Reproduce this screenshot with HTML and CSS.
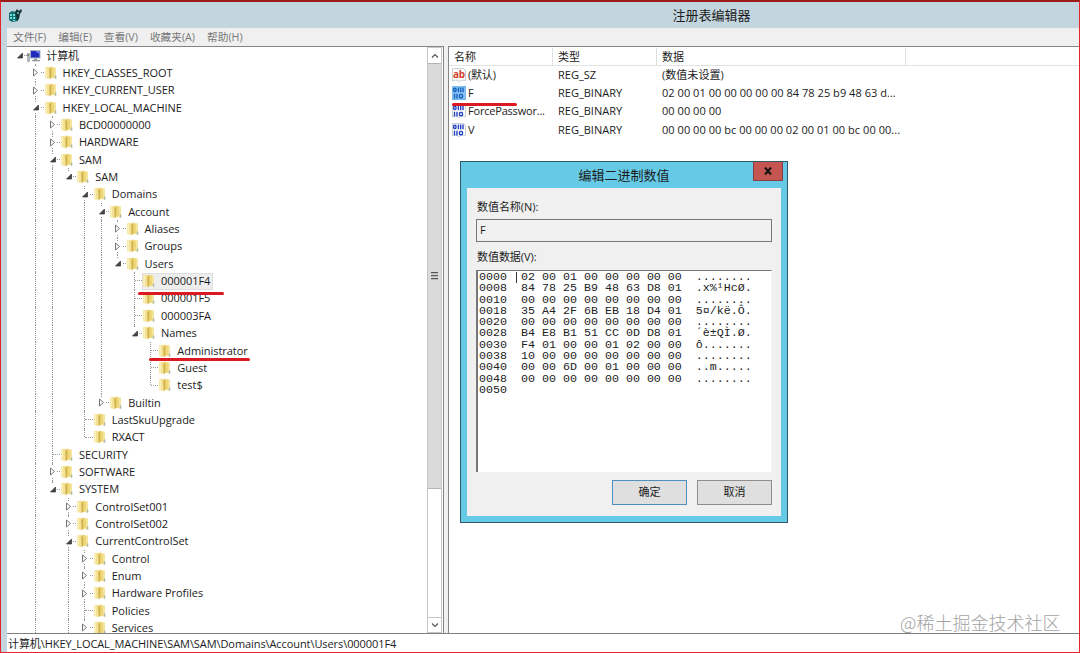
FILE: index.html
```html
<!DOCTYPE html>
<html lang="zh-CN">
<head>
<meta charset="utf-8">
<title>注册表编辑器</title>
<link rel="stylesheet" href="styles.css">
</head>
<body>
<svg class="defs" width="0" height="0">
  <defs>
    <symbol id="folder" viewBox="0 0 14 16">
      <path d="M1 2.500 5.500 1.500V14L1 13Z" fill="#f3e295"/>
      <path d="M1.500 3 3 2.700V12.800L1.500 12.500Z" fill="#fbf2bf"/>
      <path d="M5 3 8 1.500V12.500L5.500 14.500Z" fill="#e2c45c"/>
      <path d="M6.300 4V13" stroke="#c9a643" stroke-width=".9"/>
      <path d="M8 2 12 2.500V13.500L8 13Z" fill="#f5e59c"/>
      <path d="M7.500 3 10 2.500V12L7.500 13Z" fill="#eed779"/>
      <path d="M10.800 10.500H12.300V13.700H10.800Z" fill="#aeb8a2"/>
    </symbol>
    <symbol id="computer" viewBox="0 0 14 16">
      <path d="M0 5H3V14H0Z" fill="#b5b8b8"/><path d="M0 7H2" stroke="#555"/>
      <path d="M3 2H13.500V10.500H3Z" fill="#a9b4c4"/><path d="M4 3H12.500V9.500H4Z" fill="#1f2bbd"/>
      <path d="M8 3H12.500V6Z" fill="#7383ee"/><path d="M7 10.500H10V12H13V13.300H5V12H7Z" fill="#939999"/>
    </symbol>
    <symbol id="page" viewBox="0 0 14 14">
      <path d="M.5.500H12L13.500 3V12.500L10 12 7 13.500 4 12 .5 13Z" fill="#fff" stroke="#bbc1c9" stroke-width=".8"/>
    </symbol>
    <symbol id="bits" viewBox="0 0 14 14">
      <g fill="none" stroke="currentColor" stroke-width="1.400"><rect x="1.700" y="2.200" width="2.300" height="3.300" rx="1"/><path d="M6.400 1.500V6.200M8.700 1.500V6.200M11 1.500V6.200M2.500 7.700V12.400M5 7.700V12.400"/><rect x="7.500" y="8.400" width="3" height="3.300" rx="1"/></g>
    </symbol>
  </defs>
</svg>
<div class="window">
  <header class="titlebar">
    <svg class="app-icon" viewBox="0 0 15 15"><path d="M1 5 4 3 8 4 10 8V13L4 14 1 12Z" fill="#126d6c"/><path d="M2 6H4V8H2ZM5 6H7V8H5ZM2 9H4V11H2ZM5 9H7V11H5ZM5 12H7V13H5Z" fill="#70dedc"/><path d="M7 4 9 1 11 3 13 1 14 3 12 6 11 11 9 13 8 8Z" fill="#173238"/><path d="M9 4H11V6H9Z" fill="#4aa4a8"/></svg>
    <span class="title">注册表编辑器</span>
  </header>
  <div class="frame">
    <nav class="menu"><span>文件(F)</span><span>编辑(E)</span><span>查看(V)</span><span>收藏夹(A)</span><span>帮助(H)</span></nav>
    <main class="panes">
      <section class="tree-pane">
        <div class="tree" id="tree"></div>
        <div class="scroll">
          <span class="arrow"><svg viewBox="0 0 8 6"><path d="M1 4.500 4 1.500 7 4.500"/></svg></span>
          <span class="thumb"><i></i><i></i><i></i></span>
          <span class="track"></span>
          <span class="arrow down"><svg viewBox="0 0 8 6"><path d="M1 1.500 4 4.500 7 1.500"/></svg></span>
        </div>
      </section>
      <section class="list">
        <div class="cols head"><span>名称</span><span>类型</span><span>数据</span></div>
        <div class="cols"><span class="name"><svg><use href="#page"/><text class="ab" x="1" y="9.500">ab</text></svg>(默认)</span><span>REG_SZ</span><span>(数值未设置)</span></div>
        <div class="cols"><span class="name sel"><svg><use href="#page"/><use href="#bits"/></svg>F</span><span>REG_BINARY</span><span>02 00 01 00 00 00 00 00 84 78 25 b9 48 63 d...</span></div>
        <div class="cols"><span class="name"><svg><use href="#page"/><use href="#bits"/></svg>ForcePasswor...</span><span>REG_BINARY</span><span>00 00 00 00</span></div>
        <div class="cols"><span class="name"><svg><use href="#page"/><use href="#bits"/></svg>V</span><span>REG_BINARY</span><span>00 00 00 00 bc 00 00 00 02 00 01 00 bc 00 00...</span></div>
      </section>
    </main>
    <footer class="status">计算机\HKEY_LOCAL_MACHINE\SAM\SAM\Domains\Account\Users\000001F4</footer>
  </div>
</div>
<div class="dialog">
  <div class="dialog-title">编辑二进制数值</div>
  <div class="close"><svg viewBox="0 0 8 8"><path d="M1 .5 7 7.500M7 .5 1 7.500"/></svg></div>
  <div class="dialog-body">
    <label>数值名称(N):</label>
    <div class="field">F</div>
    <label>数值数据(V):</label>
    <div class="hex"><i class="caret"></i><pre>0000  02 00 01 00 00 00 00 00  ........
0008  84 78 25 B9 48 63 D8 01  .x%¹HcØ.
0010  00 00 00 00 00 00 00 00  ........
0018  35 A4 2F 6B EB 18 D4 01  5¤/kë.Ô.
0020  00 00 00 00 00 00 00 00  ........
0028  B4 E8 B1 51 CC 0D D8 01  ´è±QÌ.Ø.
0030  F4 01 00 00 01 02 00 00  ô.......
0038  10 00 00 00 00 00 00 00  ........
0040  00 00 6D 00 01 00 00 00  ..m.....
0048  00 00 00 00 00 00 00 00  ........
0050</pre></div>
    <div class="buttons"><span class="btn primary">确定</span><span class="btn">取消</span></div>
  </div>
</div>
<i class="mark mark-user"></i><i class="mark mark-admin"></i><i class="mark mark-value"></i>
<div class="watermark">@稀土掘金技术社区</div>
<script src="tree.js"></script>
</body>
</html>
```

FILE: styles.css
```css
* { box-sizing: border-box; }
body { margin: 0; width: 1080px; height: 653px; overflow: hidden; position: relative; background: #fff;
  font: 11px/14px "Open Sans", "Noto Sans CJK SC", sans-serif; color: #1c1c1c; }
.defs { position: absolute; }
.window { height: 653px; display: flex; flex-direction: column; background: #c3d5de;
  border: 1px solid #e5252b; border-top: 2px solid #9c1c1c; }
.titlebar { height: 26px; flex: none; display: flex; align-items: center; padding-left: 7px; }
.app-icon { width: 15px; height: 15px; }
.title { flex: 1; text-align: center; font-size: 13px; padding-left: 321px; }
.frame { flex: 1; min-height: 0; margin-left: 6px; display: flex; flex-direction: column; background: #f0f0f0; }
.menu { height: 18px; display: flex; gap: 12px; padding-left: 6px; line-height: 18px; font-size: 10.700px; color: #777; }
.panes { flex: 1; min-height: 0; display: flex; gap: 4px; border-bottom: 1px solid #7f7f7f; }
.tree-pane { width: 437px; display: flex; background: #fff; border: solid #858585; border-width: 1px 1px 0 0; overflow: hidden; }
.tree { flex: 1; padding: 0 0 0 3.800px; letter-spacing: -.04px; }
.row { height: 17.350px; display: flex; align-items: center; white-space: nowrap; }
.cell { width: 16.400px; height: 100%; flex: none; display: grid; grid-template-columns: 8px 8.400px; position: relative; }
.cell.line::before, .cell.half::before { content: ""; grid-column: 2; height: 100%; border-left: 1px dotted #979797; }
.cell.half::before { height: 50%; }
.cell.link::after { content: ""; position: absolute; left: 9px; right: 0; top: 8px; border-top: 1px dotted #979797; }
.cell svg { position: absolute; z-index: 1; left: 4px; top: 3px; width: 9px; height: 11px; background: #fff; }
.node { display: flex; align-items: center; gap: 5px; height: 17px; padding-right: 3px; }
.node svg { width: 14px; height: 16px; }
.node.selected { background: #eeeeee; box-shadow: 0 0 0 1px #dedede inset; }
.scroll { width: 15px; margin-right: 1px; display: flex; flex-direction: column; border: 1px solid #c6c6c6; }
.arrow { height: 15px; flex: none; display: grid; place-items: center; }
.arrow svg { width: 8px; height: 6px; }
.arrow path { fill: none; stroke: #555; stroke-width: 1.200; }
.thumb { height: 426px; flex: none; background: #dadada; border: solid #b5b5b5; border-width: 1px 0; display: flex; flex-direction: column; align-items: center; justify-content: center; gap: 1px; }
.thumb i { width: 7px; height: 2px; background: #555; border-bottom: 1px solid #bbb; }
.track { flex: 1; }
.down { border-top: 1px solid #c6c6c6; }
.list { flex: 1; background: #fff; border: solid #858585; border-width: 1px 0 0 1px; }
.cols { height: 18.200px; display: grid; grid-template-columns: 104px 104px 249px; align-items: center; white-space: nowrap; }
.cols > span { padding-left: 5px; }
.cols > span:nth-child(3) { letter-spacing: .04px; }
.cols.head { height: 19px; padding-top: 1px; border-bottom: 1px solid #e3e3e3; align-items: stretch; line-height: 18px; }
.head > span { border-right: 1px solid #e0e0e0; }
.cols > .name { display: flex; align-items: center; gap: 2px; padding-left: 4px; letter-spacing: -.2px; }
.name svg { width: 14px; height: 14px; flex: none; margin-left: -1px; color: #2542bf; }
.name.sel svg { background: #73b9f1; color: #1763c4; }
.name.sel use:first-child { opacity: .15; }
.ab { font: bold 10px "Open Sans", sans-serif; fill: #cf3f2a; }
.status { height: 18px; flex: none; background: #fff; line-height: 19px; padding-left: 1px; letter-spacing: -.08px; }
.dialog { position: absolute; left: 460px; top: 161px; width: 328px; height: 362px; background: #66cae7; border: 1px solid #31596a; }
.dialog-title { height: 26px; line-height: 26px; text-align: center; font-size: 13px; }
.close { position: absolute; left: 292px; top: 0; width: 30px; height: 19px; display: grid; place-items: center; background: #c45550; border: 1px solid #853f43; border-top: 0; }
.close svg { width: 8px; height: 8px; }
.close path { stroke: #111; stroke-width: 2; }
.dialog-body { width: 314px; height: 328px; margin-left: 6px; padding: 12px 9px 0 10px; background: #f0f0f0; }
.dialog-body label { display: block; height: 16px; letter-spacing: -.05px; }
.field { height: 23px; width: 296px; margin: 3px 0 8px -1px; border: 1px solid #777; padding: 3px; }
.hex { position: relative; width: 296px; height: 202px; margin: 4px 0 0 -1px; background: #fff; border: solid #777; border-width: 1px 0 0 2px; border-right: 1px solid #f5f5f5; }
.hex pre { margin: 0; padding: 1px 0 0 1px; font: 11.670px/11.300px "Liberation Mono", monospace; color: #222; }
.caret { position: absolute; left: 38px; top: 1px; width: 1px; height: 11px; background: #333; }
.buttons { display: flex; justify-content: flex-end; gap: 10px; margin-top: 8px; }
.btn { width: 75px; height: 25px; border: 1px solid #8e8e8e; background: #dfdfdf; text-align: center; line-height: 22px; }
.btn.primary { border-color: #4d8fc0; }
.mark { position: absolute; height: 3px; border-radius: 2px; background: #da1a20; }
.mark-user { left: 138px; top: 292px; width: 86px; }
.mark-admin { left: 149px; top: 358px; width: 101px; }
.mark-value { left: 452px; top: 103px; width: 65px; }
.watermark { position: absolute; left: 900px; top: 610px; font: 300 18px/24px "Noto Sans CJK SC", sans-serif; color: #a2a2a2; white-space: nowrap; }
```

FILE: tree.js
```js
// [depth, label, state]: state is "open", "closed" or "" for a leaf
const nodes = [
  [0, "计算机", "open"], [1, "HKEY_CLASSES_ROOT", "closed"], [1, "HKEY_CURRENT_USER", "closed"],
  [1, "HKEY_LOCAL_MACHINE", "open"], [2, "BCD00000000", "closed"], [2, "HARDWARE", "closed"],
  [2, "SAM", "open"], [3, "SAM", "open"], [4, "Domains", "open"], [5, "Account", "open"],
  [6, "Aliases", "closed"], [6, "Groups", "closed"], [6, "Users", "open"],
  [7, "000001F4", ""], [7, "000001F5", ""], [7, "000003FA", ""], [7, "Names", "open"],
  [8, "Administrator", ""], [8, "Guest", ""], [8, "test$", ""], [5, "Builtin", "closed"],
  [4, "LastSkuUpgrade", ""], [4, "RXACT", ""], [2, "SECURITY", ""], [2, "SOFTWARE", "closed"],
  [2, "SYSTEM", "open"], [3, "ControlSet001", "closed"], [3, "ControlSet002", "closed"],
  [3, "CurrentControlSet", "open"], [4, "Control", "closed"], [4, "Enum", "closed"],
  [4, "Hardware Profiles", "closed"], [4, "Policies", ""], [4, "Services", "closed"]
];
// Branches that go on below the visible part of the tree
const below = [1, 3, 4];

function continues(index, depth) {
  for (let i = index + 1; i < nodes.length; i++) {
    if (nodes[i][0] === depth) return true;
    if (nodes[i][0] < depth) return false;
  }
  return below.includes(depth);
}

const arrows = {
  open: '<svg viewBox="0 0 9 11"><path d="M7.500 3V8H2.500Z" fill="#444" stroke="#333" stroke-width=".7"/></svg>',
  closed: '<svg viewBox="0 0 9 11"><path d="M2.500 2 6.500 5.500 2.500 9Z" fill="#fff" stroke="#777"/></svg>'
};

document.getElementById("tree").innerHTML = nodes.map(([depth, label, state], index) => {
  let cells = "";
  for (let d = 0; d <= depth; d++) {
    const line = d > 0 && continues(index, d) ? " line" : d > 0 && d === depth ? " half" : "";
    cells += `<span class="cell${line}${d === depth ? " link" : ""}">${d === depth && state ? arrows[state] : ""}</span>`;
  }
  const icon = depth ? "folder" : "computer";
  const selected = label === "000001F4" ? " selected" : "";
  return `<div class="row">${cells}<span class="node${selected}"><svg><use href="#${icon}"/></svg>${label}</span></div>`;
}).join("");
```
